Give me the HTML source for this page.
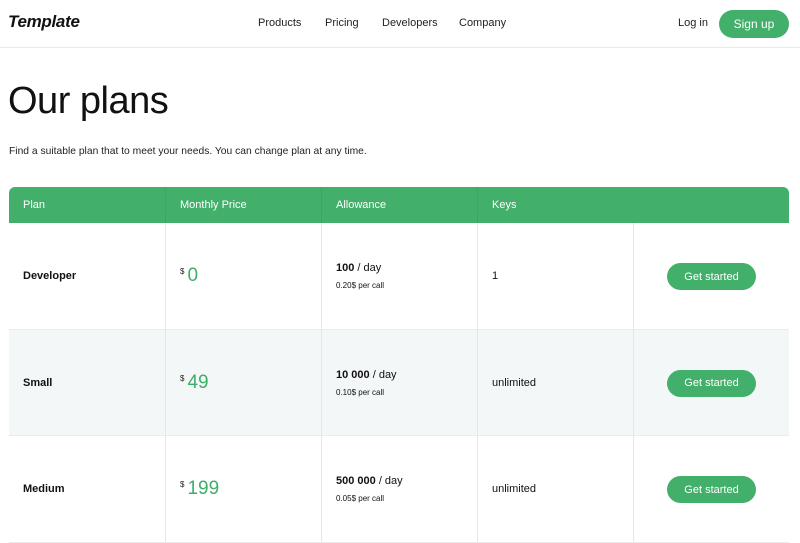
<!DOCTYPE html>
<html><head><style>
*{margin:0;padding:0;box-sizing:border-box}
body{width:800px;height:500px;overflow:hidden;background:#fff;font-family:"Liberation Sans",sans-serif;color:#111;position:relative}
.nav{position:absolute;top:0;left:0;width:800px;height:48px;border-bottom:1px solid #eaeaea}
.logo{position:absolute;left:8px;top:12px;font-size:17px;font-weight:bold;font-style:italic;letter-spacing:-0.3px}
.nl{position:absolute;top:17px;font-size:11px;color:#222}
.su{position:absolute;left:719px;top:10px;width:70px;height:28px;border-radius:14px;background:#42b06b;color:#fff;font-size:12px;display:flex;align-items:center;justify-content:center}
h1{position:absolute;left:8px;top:80px;font-size:38px;font-weight:normal;letter-spacing:-0.5px}
.sub{position:absolute;left:9px;top:146px;font-size:10.3px;color:#222}
.tbl{position:absolute;left:9px;top:187px;width:780px;border-radius:6px 6px 0 0;overflow:hidden}
.hd{height:36px;background:#42b06b;color:#fff;font-size:11px;position:relative}
.row{height:106.5px;position:relative;border-bottom:1px solid #e8ecec}
.row.alt{background:#f3f7f7}
.c{position:absolute;top:0;height:100%;width:156px;border-left:1px solid #e3e7e7}
.hd .c{border-left:1px solid #3ea564}
.hd span{position:absolute;left:14px;top:12px}
.name{position:absolute;left:14px;top:47px;font-size:11px;font-weight:bold}
.pr{position:absolute;left:14px;top:42px;color:#3fae68;font-size:19px}
.pr small{font-size:8px;color:#222;vertical-align:7px;margin-right:3px}
.al{position:absolute;left:14px;top:39px;font-size:11px}
.al2{position:absolute;left:14px;top:58px;font-size:8px}
.k{position:absolute;left:14px;top:47px;font-size:11px}
.bt{position:absolute;left:33px;top:40px;width:89px;height:27px;border-radius:14px;background:#42b06b;color:#fff;font-size:11px;display:flex;align-items:center;justify-content:center}
</style></head><body>
<div class="nav">
<div class="logo">Template</div>
<div class="nl" style="left:258px">Products</div>
<div class="nl" style="left:325px">Pricing</div>
<div class="nl" style="left:382px">Developers</div>
<div class="nl" style="left:459px">Company</div>
<div class="nl" style="left:678px">Log in</div>
<div class="su">Sign up</div>
</div>
<h1>Our plans</h1>
<div class="sub">Find a suitable plan that to meet your needs. You can change plan at any time.</div>
<div class="tbl">
<div class="hd">
<div class="c" style="left:0;border-left:none"><span>Plan</span></div>
<div class="c" style="left:156px"><span>Monthly Price</span></div>
<div class="c" style="left:312px"><span>Allowance</span></div>
<div class="c" style="left:468px;width:312px"><span>Keys</span></div>
</div>
<div class="row">
<div class="c" style="left:0;border-left:none"><div class="name">Developer</div></div>
<div class="c" style="left:156px"><div class="pr"><small>$</small>0</div></div>
<div class="c" style="left:312px"><div class="al"><b>100</b> / day</div><div class="al2">0.20$ per call</div></div>
<div class="c" style="left:468px"><div class="k">1</div></div>
<div class="c" style="left:624px"><div class="bt">Get started</div></div>
</div>
<div class="row alt">
<div class="c" style="left:0;border-left:none"><div class="name">Small</div></div>
<div class="c" style="left:156px"><div class="pr"><small>$</small>49</div></div>
<div class="c" style="left:312px"><div class="al"><b>10 000</b> / day</div><div class="al2">0.10$ per call</div></div>
<div class="c" style="left:468px"><div class="k">unlimited</div></div>
<div class="c" style="left:624px"><div class="bt">Get started</div></div>
</div>
<div class="row">
<div class="c" style="left:0;border-left:none"><div class="name">Medium</div></div>
<div class="c" style="left:156px"><div class="pr"><small>$</small>199</div></div>
<div class="c" style="left:312px"><div class="al"><b>500 000</b> / day</div><div class="al2">0.05$ per call</div></div>
<div class="c" style="left:468px"><div class="k">unlimited</div></div>
<div class="c" style="left:624px"><div class="bt">Get started</div></div>
</div>
</div>
</body></html>
